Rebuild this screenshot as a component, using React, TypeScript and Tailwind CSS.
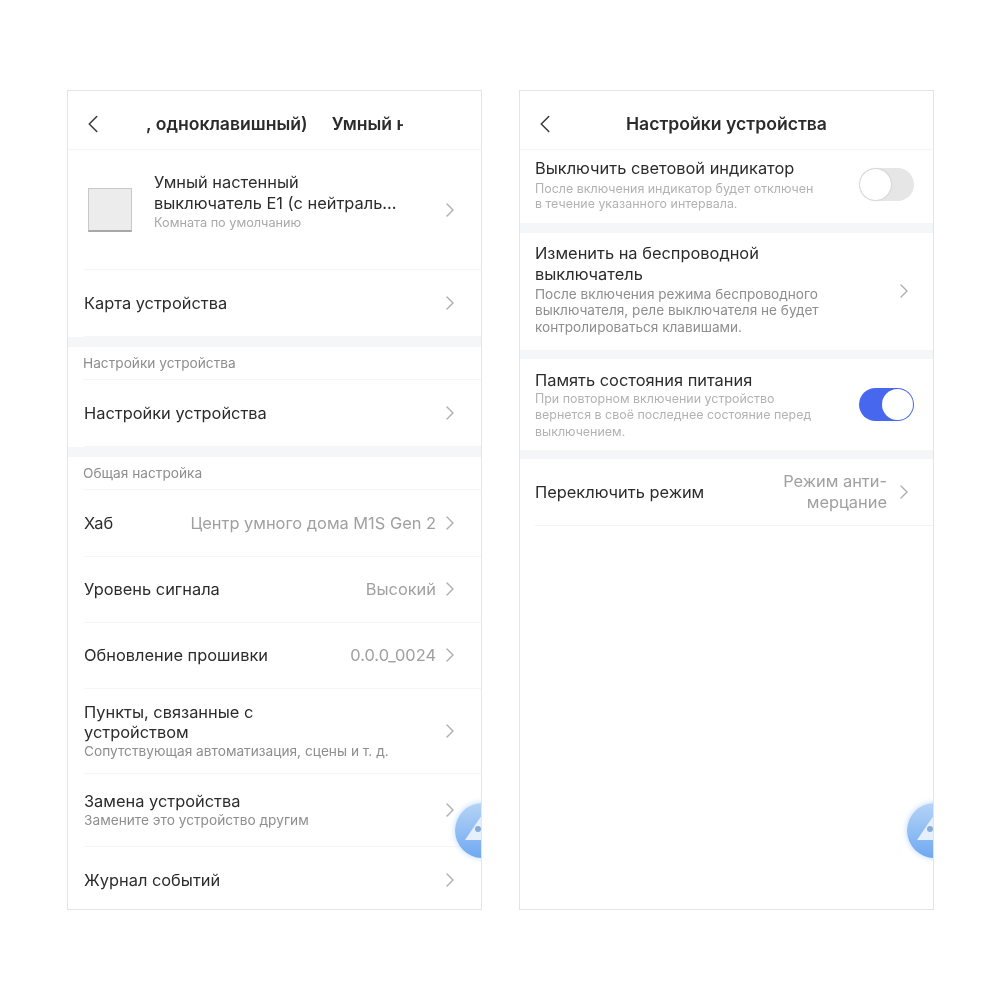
import React from "react";
import { ChevronLeft, ChevronRight } from "lucide-react";

const Chevron = ({ className = "" }: { className?: string }) => (
  <ChevronRight size={24} strokeWidth={1.4} className={`text-[#adadad] shrink-0 ${className}`} />
);

const Band = ({ h = "h-[10px]" }: { h?: string }) => <div className={`${h} bg-[#f5f6f8]`} />;

function Header({ children }: { children: React.ReactNode }) {
  return (
    <div className="relative h-[59px] pt-[9px] flex items-center justify-center border-b border-[#f6f6f6]">
      <ChevronLeft size={30} strokeWidth={1.25} className="absolute left-[10px] top-[18px] text-[#3a3a3a]" />
      {children}
    </div>
  );
}

function Row({
  label,
  value,
  className = "h-[67px]",
}: {
  label: string;
  value?: string;
  className?: string;
}) {
  return (
    <div className={`${className} ml-[16px] pr-[19px] flex items-center justify-between border-b border-[#f6f6f6]`}>
      <span className="text-[16.4px] text-[#2b2b2b] whitespace-nowrap">{label}</span>
      <div className="flex items-center gap-[2px]">
        {value && <span className="text-[16.4px] text-[#a0a0a0] whitespace-nowrap">{value}</span>}
        <Chevron />
      </div>
    </div>
  );
}

function SectionLabel({ text }: { text: string }) {
  return (
    <div className="h-[33px] ml-[15px] flex items-center text-[13.7px] text-[#8e8e8e] border-b border-[#f6f6f6]">{text}</div>
  );
}

function Fab() {
  return (
    <div className="absolute top-[712px] -right-[29px] w-[55px] h-[55px] rounded-full bg-gradient-to-b from-[#b5d4f6] to-[#6fa8f1] shadow-[0_0_6px_#bcd8fa]">
      <svg viewBox="0 0 55 55" className="w-full h-full">
        <path d="M10 37 L27 12 L44 37 Z" fill="#e6f0fc" />
        <circle cx="23" cy="26" r="3" fill="#88acd8" />
      </svg>
    </div>
  );
}

function Toggle({ on, className = "" }: { on: boolean; className?: string }) {
  return (
    <div
      className={`w-[55px] h-[33px] rounded-full flex items-center shrink-0 ${className} ${
        on ? "bg-[#4768ee] justify-end" : "bg-[#e6e6e6] justify-start"
      }`}
    >
      <div className={`w-[31px] h-[31px] rounded-full bg-white ${on ? "mr-px" : "ml-px shadow-[0_0_2px_#b5b5b5]"}`} />
    </div>
  );
}

export default function App() {
  return (
    <div className="w-[1000px] h-[1000px] bg-white flex items-start gap-[37px] pl-[67px] pt-[90px] font-['Inter',sans-serif] blur-[0.4px]">
      {/* left screen */}
      <div className="relative w-[415px] h-[820px] bg-white border border-[#e4e4e4] overflow-hidden">
        <Header>
          <div className="w-[257px] overflow-hidden whitespace-nowrap text-[17.6px] font-semibold text-[#2b2b2b]">
            <span>, одноклавишный)</span>
            <span className="ml-[24px]">Умный настенный</span>
          </div>
        </Header>

        <div className="h-[120px] ml-[16px] pl-[4px] pr-[19px] flex items-center justify-between border-b border-[#f6f6f6]">
          <div className="flex items-center">
            <div className="w-[44px] h-[44px] bg-[#ececec] border border-[#c8c8c8] border-b-[2px] border-b-[#a8a8a8]" />
            <div className="ml-[22px] -mt-[16px]">
              <div className="text-[16.4px] leading-[21px] text-[#2b2b2b]">
                Умный настенный
                <br />
                выключатель E1 (с нейтраль...
              </div>
              <div className="text-[12.7px] leading-[18px] text-[#a8a8a8]">Комната по умолчанию</div>
            </div>
          </div>
          <Chevron />
        </div>

        <Row label="Карта устройства" />
        <Band />
        <SectionLabel text="Настройки устройства" />
        <Row label="Настройки устройства" />
        <Band />
        <SectionLabel text="Общая настройка" />
        <Row label="Хаб" value="Центр умного дома M1S Gen 2" />
        <Row label="Уровень сигнала" value="Высокий" className="h-[66px]" />
        <Row label="Обновление прошивки" value="0.0.0_0024" className="h-[66px]" />

        <div className="h-[85px] ml-[16px] pr-[19px] flex items-center justify-between border-b border-[#f6f6f6]">
          <div>
            <div className="text-[16.4px] leading-[20px] text-[#2b2b2b]">
              Пункты, связанные с
              <br />
              устройством
            </div>
            <div className="text-[13.7px] leading-[19px] text-[#8e8e8e]">Сопутствующая автоматизация, сцены и т. д.</div>
          </div>
          <Chevron />
        </div>

        <div className="h-[73px] ml-[16px] pr-[19px] flex items-center justify-between border-b border-[#f6f6f6]">
          <div>
            <div className="text-[16.4px] leading-[20px] text-[#2b2b2b]">Замена устройства</div>
            <div className="text-[13.7px] leading-[19px] text-[#8e8e8e]">Замените это устройство другим</div>
          </div>
          <Chevron />
        </div>

        <div className="h-[64px] pt-[2px] ml-[16px] pr-[19px] flex items-center justify-between">
          <span className="text-[16.4px] text-[#2b2b2b]">Журнал событий</span>
          <Chevron />
        </div>

        <Fab />
      </div>

      {/* right screen */}
      <div className="relative w-[415px] h-[820px] bg-white border border-[#e4e4e4] overflow-hidden">
        <Header>
          <span className="text-[17.6px] font-semibold text-[#2b2b2b]">Настройки устройства</span>
        </Header>

        <div className="h-[73px] pl-[15px] pr-[19px] flex items-center justify-between">
          <div className="-mt-[3px]">
            <div className="text-[16.4px] leading-[19px] text-[#2b2b2b]">Выключить световой индикатор</div>
            <div className="mt-[3px] text-[12.45px] leading-[15.5px] text-[#b2b2b2]">
              После включения индикатор будет отключен
              <br />
              в течение указанного интервала.
            </div>
          </div>
          <Toggle on={false} className="-mt-[4px]" />
        </div>
        <Band />

        <div className="h-[117px] pl-[15px] pr-[17px] flex items-center justify-between">
          <div className="-mt-[4px]">
            <div className="text-[16.4px] leading-[21px] text-[#2b2b2b] -mt-[1px]">
              Изменить на беспроводной
              <br />
              выключатель
            </div>
            <div className="mt-[1px] text-[13.6px] leading-[16.5px] text-[#8e8e8e]">
              После включения режима беспроводного
              <br />
              выключателя, реле выключателя не будет
              <br />
              контролироваться клавишами.
            </div>
          </div>
          <Chevron className="-mt-[2px]" />
        </div>
        <Band h="h-[9px]" />

        <div className="h-[91px] pl-[15px] pr-[19px] flex items-center justify-between">
          <div className="mt-[2px]">
            <div className="text-[16.4px] leading-[19px] text-[#2b2b2b]">Память состояния питания</div>
            <div className="mt-[1px] text-[12.45px] leading-[16.5px] text-[#b2b2b2]">
              При повторном включении устройство
              <br />
              вернется в своё последнее состояние перед
              <br />
              выключением.
            </div>
          </div>
          <Toggle on />
        </div>
        <Band h="h-[9px]" />

        <div className="h-[67px] ml-[15px] pr-[17px] flex items-center justify-between border-b border-[#f3f3f3]">
          <span className="text-[16.4px] text-[#2b2b2b]">Переключить режим</span>
          <div className="flex items-center gap-[5px]">
            <span className="text-[16.4px] leading-[21px] text-[#a0a0a0] text-right">
              Режим анти-
              <br />
              мерцание
            </span>
            <Chevron />
          </div>
        </div>

        <Fab />
      </div>
    </div>
  );
}
